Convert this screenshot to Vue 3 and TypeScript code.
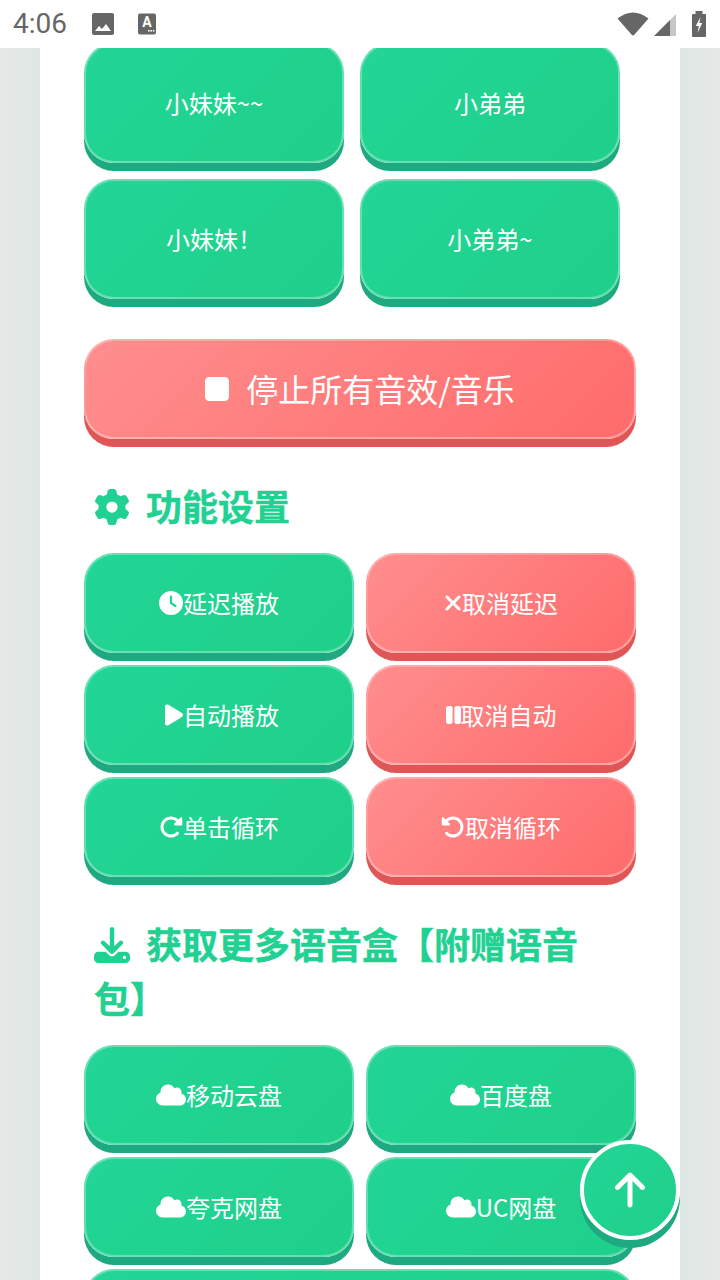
<script setup lang="ts">
type IconName = 'stop' | 'gear' | 'clock' | 'xmark' | 'play' | 'pause' | 'redo' | 'undo' | 'download' | 'cloud' | 'up'

const icons: Record<IconName, { w: number; d: string }> = {
  stop: { w: 384, d: 'M0 128C0 92.7 28.7 64 64 64H320c35.3 0 64 28.7 64 64V384c0 35.3-28.7 64-64 64H64c-35.3 0-64-28.7-64-64V128z' },
  gear: { w: 512, d: 'M495.9 166.6c3.2 8.7 .5 18.4-6.4 24.6l-43.3 39.4c1.1 8.3 1.7 16.8 1.7 25.4s-.6 17.1-1.7 25.4l43.3 39.4c6.9 6.2 9.6 15.9 6.4 24.6c-4.4 11.9-9.7 23.3-15.8 34.3l-4.7 8.1c-6.6 11-14 21.4-22.1 31.2c-5.9 7.2-15.7 9.6-24.5 6.8l-55.7-17.7c-13.4 10.3-28.2 18.9-44 25.4l-12.5 57.1c-2 9.1-9 16.3-18.2 17.8c-13.8 2.3-28 3.5-42.5 3.5s-28.7-1.2-42.5-3.5c-9.2-1.5-16.2-8.7-18.2-17.8l-12.5-57.1c-15.8-6.5-30.6-15.1-44-25.4L83.1 425.9c-8.8 2.8-18.6 .3-24.5-6.8c-8.1-9.8-15.5-20.2-22.1-31.2l-4.7-8.1c-6.1-11-11.4-22.4-15.8-34.3c-3.2-8.7-.5-18.4 6.4-24.6l43.3-39.4C64.6 273.1 64 264.6 64 256s.6-17.1 1.7-25.4L22.4 191.2c-6.9-6.2-9.6-15.9-6.4-24.6c4.4-11.9 9.7-23.3 15.8-34.3l4.7-8.1c6.6-11 14-21.4 22.1-31.2c5.9-7.2 15.7-9.6 24.5-6.8l55.7 17.7c13.4-10.3 28.2-18.9 44-25.4l12.5-57.1c2-9.1 9-16.3 18.2-17.8C227.3 1.2 241.5 0 256 0s28.7 1.2 42.5 3.5c9.2 1.5 16.2 8.7 18.2 17.8l12.5 57.1c15.8 6.5 30.6 15.1 44 25.4l55.7-17.7c8.8-2.8 18.6-.3 24.5 6.8c8.1 9.8 15.5 20.2 22.1 31.2l4.7 8.1c6.1 11 11.4 22.4 15.8 34.3zM256 336a80 80 0 1 0 0-160 80 80 0 1 0 0 160z' },
  clock: { w: 512, d: 'M256 0a256 256 0 1 1 0 512A256 256 0 1 1 256 0zM232 120V256c0 8 4 15.5 10.7 20l96 64c11 7.4 25.9 4.4 33.3-6.7s4.4-25.9-6.7-33.3L280 243.2V120c0-13.3-10.7-24-24-24s-24 10.7-24 24z' },
  xmark: { w: 384, d: 'M342.6 150.6c12.5-12.5 12.5-32.8 0-45.3s-32.8-12.5-45.3 0L192 210.7 86.6 105.4c-12.5-12.5-32.8-12.5-45.3 0s-12.5 32.8 0 45.3L146.7 256 41.4 361.4c-12.5 12.5-12.5 32.8 0 45.3s32.8 12.5 45.3 0L192 301.3 297.4 406.6c12.5 12.5 32.8 12.5 45.3 0s12.5-32.8 0-45.3L237.3 256 342.6 150.6z' },
  play: { w: 384, d: 'M73 39c-14.8-9.1-33.4-9.4-48.5-.9S0 62.6 0 80V432c0 17.4 9.4 33.4 24.5 41.9s33.7 8.1 48.5-.9L361 297c14.3-8.7 23-24.2 23-41s-8.7-32.2-23-41L73 39z' },
  pause: { w: 320, d: 'M48 64C21.5 64 0 85.5 0 112V400c0 26.5 21.5 48 48 48H92c26.5 0 48-21.5 48-48V112c0-26.5-21.5-48-48-48H48zm180 0c-26.5 0-48 21.5-48 48V400c0 26.5 21.5 48 48 48h44c26.5 0 48-21.5 48-48V112c0-26.5-21.5-48-48-48H228z' },
  redo: { w: 512, d: 'M463.5 224H472c13.3 0 24-10.7 24-24V72c0-9.7-5.8-18.5-14.8-22.2s-19.3-1.7-26.2 5.2L413.4 96.6c-87.6-86.5-228.7-86.2-315.8 1c-87.5 87.5-87.5 229.3 0 316.8s229.3 87.5 316.8 0c12.5-12.5 12.5-32.8 0-45.3s-32.8-12.5-45.3 0c-62.5 62.5-163.8 62.5-226.3 0s-62.5-163.8 0-226.3c62.2-62.2 162.7-62.5 225.3-1L327 183c-6.9 6.9-8.9 17.2-5.2 26.2s12.5 14.8 22.2 14.8H463.5z' },
  undo: { w: 512, d: 'M48.5 224H40c-13.3 0-24-10.7-24-24V72c0-9.7 5.8-18.5 14.8-22.2s19.3-1.7 26.2 5.2L98.6 96.6c87.6-86.5 228.7-86.2 315.8 1c87.5 87.5 87.5 229.3 0 316.8s-229.3 87.5-316.8 0c-12.5-12.5-12.5-32.8 0-45.3s32.8-12.5 45.3 0c62.5 62.5 163.8 62.5 226.3 0s62.5-163.8 0-226.3c-62.2-62.2-162.7-62.5-225.3-1L185 183c6.9 6.9 8.9 17.2 5.2 26.2s-12.5 14.8-22.2 14.8H48.5z' },
  download: { w: 512, d: 'M288 32c0-17.7-14.3-32-32-32s-32 14.3-32 32V274.7l-73.4-73.4c-12.5-12.5-32.8-12.5-45.3 0s-12.5 32.8 0 45.3l128 128c12.5 12.5 32.8 12.5 45.3 0l128-128c12.5-12.5 12.5-32.8 0-45.3s-32.8-12.5-45.3 0L288 274.7V32zM64 352c-35.3 0-64 28.7-64 64v32c0 35.3 28.7 64 64 64H448c35.3 0 64-28.7 64-64V416c0-35.3-28.7-64-64-64H346.5l-45.3 45.3c-25 25-65.5 25-90.5 0L165.5 352H64zm368 56a24 24 0 1 1 0 48 24 24 0 1 1 0-48z' },
  cloud: { w: 640, d: 'M0 336c0 79.5 64.5 144 144 144H512c70.7 0 128-57.3 128-128c0-61.9-44-113.6-102.4-125.4c4.1-10.7 6.4-22.4 6.4-34.6c0-53-43-96-96-96c-19.7 0-38.1 6-53.3 16.2C367 64.2 315.3 32 256 32C167.6 32 96 103.6 96 192c0 2.7 .1 5.4 .2 8.1C40.2 219.8 0 273.2 0 336z' },
  up: { w: 384, d: 'M214.6 41.4c-12.5-12.5-32.8-12.5-45.3 0l-160 160c-12.5 12.5-12.5 32.8 0 45.3s32.8 12.5 45.3 0L160 141.2V448c0 17.7 14.3 32 32 32s32-14.3 32-32V141.2L329.4 246.6c12.5 12.5 32.8 12.5 45.3 0s12.5-32.8 0-45.3l-160-160z' },
}

const iconWidth = (name: IconName) => ({ width: icons[name].w / 512 + 'em' })

// the third label ends in a full-width exclamation mark
const voices = ['小妹妹~~', '小弟弟', '小妹妹\uFF01', '小弟弟~']

const settings: { label: string; icon: IconName; red?: boolean }[] = [
  { label: '延迟播放', icon: 'clock' },
  { label: '取消延迟', icon: 'xmark', red: true },
  { label: '自动播放', icon: 'play' },
  { label: '取消自动', icon: 'pause', red: true },
  { label: '单击循环', icon: 'redo' },
  { label: '取消循环', icon: 'undo', red: true },
]

const clouds = ['移动云盘', '百度盘', '夸克网盘', 'UC网盘']
</script>

<template>
  <div class="phone">
    <header class="status">
      <span class="time">4:06</span>
      <svg class="st-image" viewBox="0 0 22 22">
        <path fill="#666" fill-rule="evenodd" d="M2 0h18a2 2 0 0 1 2 2v18a2 2 0 0 1-2 2H2a2 2 0 0 1-2-2V2a2 2 0 0 1 2-2zM3 18h16l-5-7-4 5-3-3z" />
      </svg>
      <svg class="st-font" viewBox="0 0 18 22">
        <rect width="18" height="21" y="0.5" rx="2" fill="#666" />
        <text x="9" y="13.5" text-anchor="middle" class="st-a">A</text>
        <rect x="10" y="17" width="1.6" height="1.6" fill="#fff" />
        <rect x="12.4" y="17" width="1.6" height="1.6" fill="#fff" />
        <rect x="14.8" y="17" width="1.6" height="1.6" fill="#fff" />
      </svg>
      <span class="st-spacer"></span>
      <svg class="st-wifi" viewBox="0 0 32 24">
        <path fill="#666" d="M0.5 6.500Q16-5.500 31.500 6.500L17.300 22.800a1.700 1.700 0 0 1-2.600 0z" />
      </svg>
      <svg class="st-signal" viewBox="0 0 22 22">
        <path fill="#c6c6c6" d="M22 0V22H16V6z" />
        <path fill="#666" d="M16 6V22H0z" />
      </svg>
      <svg class="st-battery" viewBox="0 0 14 26">
        <path fill="#666" d="M3.500 0h7v3H13a1 1 0 0 1 1 1v21a1 1 0 0 1-1 1H1a1 1 0 0 1-1-1V4a1 1 0 0 1 1-1h2.500z" />
        <path fill="#fff" d="M8.500 6 3.800 15h3l-1.300 7 4.700-10H7.300z" />
      </svg>
    </header>

    <main class="scroller">
      <div class="card">
        <div class="voice-grid">
          <button v-for="v in voices" :key="v" class="btn voice"><span>{{ v }}</span></button>
        </div>

        <button class="btn red stop">
          <svg class="ic stop-ic" :style="iconWidth('stop')" :viewBox="`0 0 ${icons.stop.w} 512`"><path :d="icons.stop.d" /></svg>
          <span>停止所有音效/音乐</span>
        </button>

        <h3 class="title">
          <svg class="ic title-ic" :style="iconWidth('gear')" viewBox="0 0 512 512"><path :d="icons.gear.d" /></svg>功能设置
        </h3>
        <div class="grid">
          <button v-for="s in settings" :key="s.label" class="btn" :class="{ red: s.red, nudged: s.icon === 'play' }">
            <svg class="ic" :style="iconWidth(s.icon)" :viewBox="`0 0 ${icons[s.icon].w} 512`"><path :d="icons[s.icon].d" /></svg>
            <span>{{ s.label }}</span>
          </button>
        </div>

        <h3 class="title">
          <svg class="ic title-ic" :style="iconWidth('download')" viewBox="0 0 512 512"><path :d="icons.download.d" /></svg>获取更多语音盒【附赠语音包】
        </h3>
        <div class="grid">
          <button v-for="c in clouds" :key="c" class="btn">
            <svg class="ic" :style="iconWidth('cloud')" viewBox="0 0 640 512"><path :d="icons.cloud.d" /></svg>
            <span>{{ c }}</span>
          </button>
          <button class="btn wide"></button>
        </div>
      </div>
    </main>

    <button class="fab">
      <svg class="ic" :style="iconWidth('up')" viewBox="0 0 384 512"><path :d="icons.up.d" /></svg>
    </button>
  </div>
</template>

<style scoped>
.phone {
  position: relative;
  width: 720px;
  height: 1280px;
  display: flex;
  flex-direction: column;
  overflow: hidden;
  font-family: "Noto Sans CJK SC", Roboto, sans-serif;
}

.status {
  flex: 0 0 48px;
  height: 48px;
  display: flex;
  align-items: center;
  padding: 0 14px 0 13px;
  background: #fff;
  color: #666;
}
.time {
  font-family: Roboto, sans-serif;
  font-size: 28px;
  line-height: 48px;
  width: 79px;
}
.st-image {
  width: 22px;
  height: 22px;
}
.st-font {
  width: 18px;
  height: 22px;
  margin-left: 24px;
}
.st-a {
  font: 700 14px Roboto, sans-serif;
  fill: #fff;
}
.st-spacer {
  flex: 1;
}
.st-wifi {
  width: 32px;
  height: 24px;
}
.st-signal {
  width: 22px;
  height: 22px;
  margin-left: 5px;
  margin-top: 2px;
}
.st-battery {
  width: 14px;
  height: 26px;
  margin-left: 16px;
}

.scroller {
  flex: 1;
  min-height: 0;
  overflow: hidden;
  padding: 0 40px;
  background: linear-gradient(90deg, #e5e8e6 0, #dee8e4 40px, #dee8e4 680px, #e5e8e6 720px);
}
.card {
  display: flow-root;
  height: 100%;
  background: #fff;
  padding: 0 44px;
  box-sizing: border-box;
}

.btn {
  display: flex;
  align-items: center;
  justify-content: center;
  box-sizing: border-box;
  height: 100px;
  margin: 0;
  padding: 0;
  border: 2px solid rgba(255, 255, 255, 0.3);
  border-radius: 30px;
  color: #fff;
  font-family: inherit;
  font-size: 24px;
  background: linear-gradient(135deg, #23d596, #1fd08a);
  box-shadow: 0 8px 0 #1ea980;
}
.btn span {
  margin-bottom: 2px;
}
.btn.red {
  background: linear-gradient(135deg, #ff8e8e, #ff6b6b);
  box-shadow: 0 8px 0 #e05555;
}
.btn.nudged {
  padding-left: 6px;
}

.voice-grid {
  display: grid;
  grid-template-columns: 260px 260px;
  gap: 16px;
  margin-top: -5px;
}
.voice {
  height: 120px;
}

.stop {
  width: 100%;
  margin-top: 40px;
  font-size: 32px;
}
.stop-ic {
  margin-right: 17px;
}

.title {
  margin: 39px 0 21px;
  padding: 0 10px;
  font-size: 36px;
  line-height: 54px;
  font-weight: 700;
  color: #20d192;
  -webkit-text-stroke: 0.4px #20d192;
}
.title-ic {
  margin-right: 16px;
  vertical-align: -4px;
}

.grid {
  display: grid;
  grid-template-columns: 270px 270px;
  gap: 12px;
}
.wide {
  grid-column: 1 / -1;
}

.ic {
  height: 1em;
  fill: currentColor;
  flex: none;
}

.fab {
  position: absolute;
  left: 580px;
  top: 1140px;
  width: 100px;
  height: 100px;
  padding: 0;
  box-sizing: border-box;
  display: flex;
  align-items: center;
  justify-content: center;
  border: 4px solid #fff;
  border-radius: 50%;
  color: #fff;
  font-size: 40px;
  background: linear-gradient(135deg, #23d596, #1fd08a);
  box-shadow: 0 8px 0 #1ea980;
}
</style>
